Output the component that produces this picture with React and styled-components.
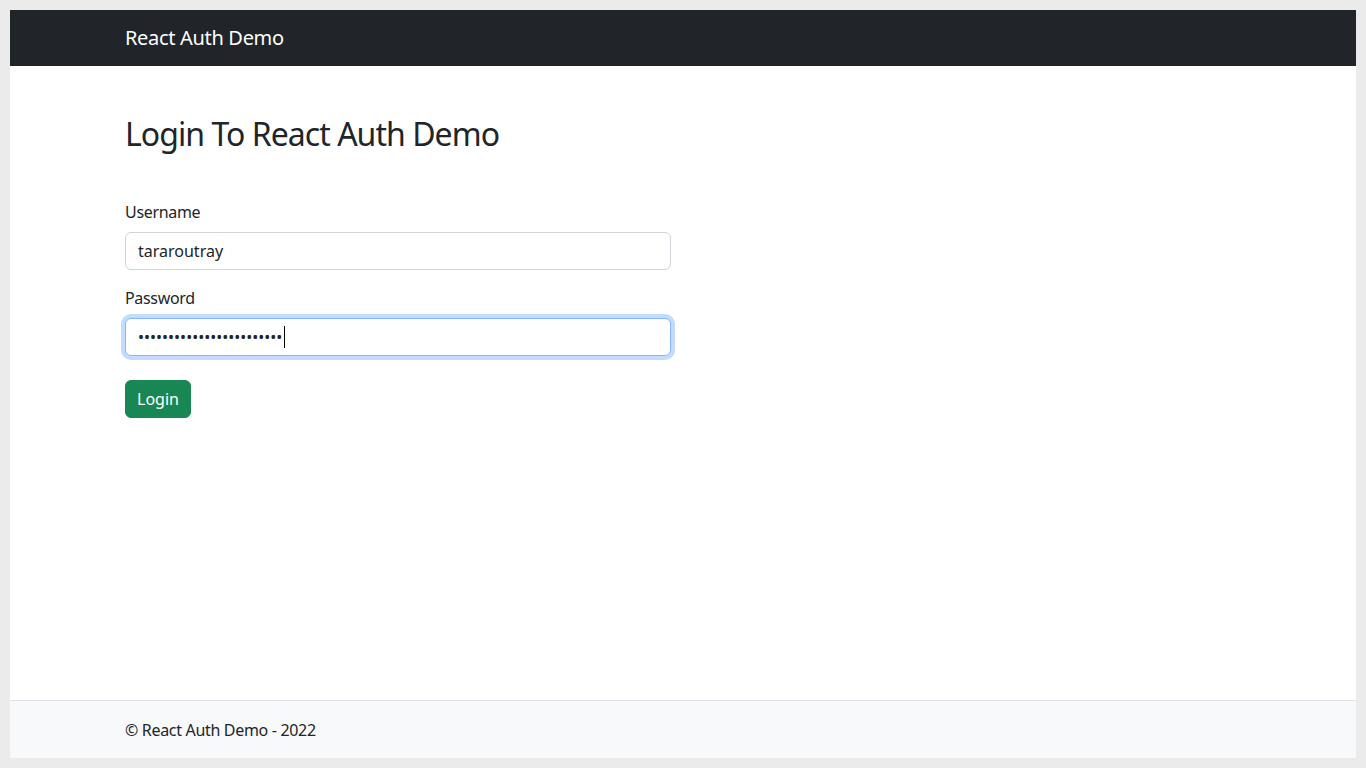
import React from 'react';
import styled, { createGlobalStyle, css } from 'styled-components';

const GlobalStyle = createGlobalStyle`
  * {
    box-sizing: border-box;
  }
  body {
    margin: 0;
    background: #ebebeb;
    font-family: 'Noto Sans', 'Open Sans', sans-serif;
    font-size: 16px;
    line-height: 1.5;
    letter-spacing: -0.02em;
    color: #212529;
  }
`;

const App = () => {
  return (
    <>
      <GlobalStyle />
      <Frame>
        <Page>
          <Navbar>
            <Container>
              <Brand href="#">React Auth Demo</Brand>
            </Container>
          </Navbar>
          <Main>
            <Container>
              <Title>Login To React Auth Demo</Title>
              <Form onSubmit={(e) => e.preventDefault()}>
                <Field>
                  <Label htmlFor="username">Username</Label>
                  <Input id="username" type="text" defaultValue="tararoutray" />
                </Field>
                <Field>
                  <Label htmlFor="password">Password</Label>
                  <InputWrap>
                    <Input
                      id="password"
                      type="password"
                      defaultValue="tararoutray@123456789012"
                      $focused
                    />
                    <Caret />
                  </InputWrap>
                </Field>
                <Button type="submit">Login</Button>
              </Form>
            </Container>
          </Main>
          <Footer>
            <Container>© React Auth Demo - 2022</Container>
          </Footer>
        </Page>
      </Frame>
    </>
  );
};

const Frame = styled.div`
  padding: 10px;
  height: 768px;
`;

const Page = styled.div`
  display: flex;
  flex-direction: column;
  height: 100%;
  background: #fff;
`;

const Container = styled.div`
  width: 1140px;
  margin: 0 auto;
  padding: 0 12px;
`;

const Navbar = styled.nav`
  display: flex;
  align-items: center;
  height: 56px;
  background: #212529;
`;

const Brand = styled.a`
  color: #fff;
  font-size: 20px;
  line-height: 30px;
  text-decoration: none;
`;

const Main = styled.main`
  flex: 1;
  padding-top: 49px;
`;

const Title = styled.h2`
  margin: 0 0 47px;
  font-size: 32px;
  font-weight: 400;
  line-height: 1.2;
  letter-spacing: -0.03em;
`;

const Form = styled.form`
  width: 546px;
`;

const Field = styled.div`
  margin-bottom: 16px;
  &:last-of-type {
    margin-bottom: 24px;
  }
`;

const Label = styled.label`
  display: inline-block;
  margin-bottom: 8px;
`;

const focusRing = css`
  border-color: #86b7fe;
  box-shadow: 0 0 0 4px rgba(13, 110, 253, 0.25);
`;

const Input = styled.input`
  display: block;
  width: 100%;
  height: 38px;
  padding: 6px 12px;
  font: inherit;
  letter-spacing: normal;
  color: #212529;
  background: #fff;
  border: 1px solid #ced4da;
  border-radius: 6px;
  outline: none;
  ${({ $focused }) => $focused && focusRing}
  &:focus {
    ${focusRing}
  }
`;

const InputWrap = styled.div`
  position: relative;
`;

const Caret = styled.span`
  position: absolute;
  left: 159px;
  top: 8px;
  width: 1px;
  height: 22px;
  background: #000;
`;

const Button = styled.button`
  display: inline-block;
  height: 38px;
  padding: 6px 11px;
  font: inherit;
  color: #fff;
  background: #198754;
  border: 1px solid #198754;
  border-radius: 6px;
  cursor: pointer;
`;

const Footer = styled.footer`
  display: flex;
  align-items: center;
  height: 58px;
  background: #f8f9fa;
  border-top: 1px solid #dee2e6;
`;

export default App;
